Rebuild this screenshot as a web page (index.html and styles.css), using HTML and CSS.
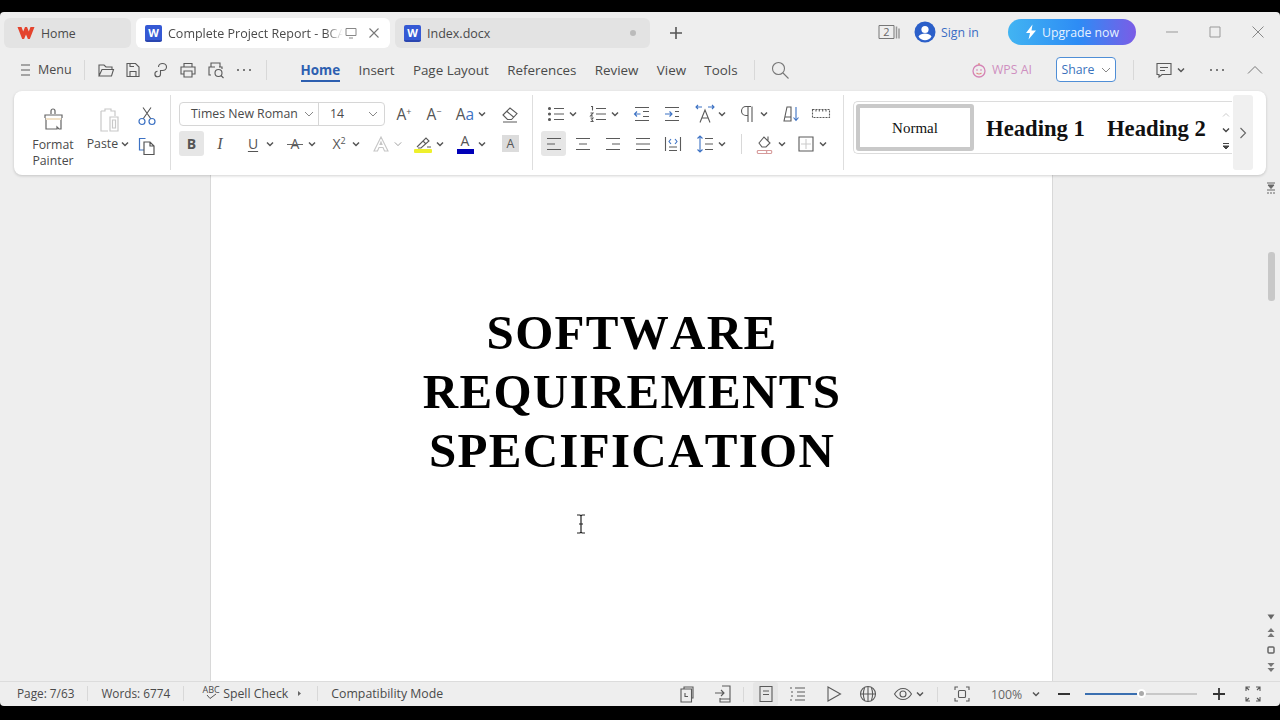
FILE: index.html
```html
<!DOCTYPE html>
<html lang="en">
<head>
    <meta charset="UTF-8">
    <meta name="viewport" content="width=device-width, initial-scale=1.0">
    <title>Complete Project Report - BCA</title>
    <link rel="stylesheet" href="styles.css">
</head>
<body>
<svg class="defs" width="0" height="0">
    <defs>
        <symbol id="caret" viewBox="0 0 8 8"><path d="M1 2.5l3 3 3-3" fill="none" stroke="#555" stroke-width="1.5"/></symbol>
        <symbol id="thin" viewBox="0 0 10 10"><path d="M1 3l4 4 4-4" fill="none" stroke="#888" stroke-width="1"/></symbol>
    </defs>
</svg>
<div class="window">

    <!-- tabs -->
    <div class="tabbar">
        <div class="tab tab-home">
            <svg width="18" height="14" viewBox="0 0 18 14"><path d="M0.500 1h4l1.700 4.500L8 1h2l1.800 4.500L13.500 1h4L12.800 13h-1.900L9 8.500 7.100 13H5.200z" fill="#e4432d"/></svg>
            <span>Home</span>
        </div>
        <div class="tab tab-active">
            <span class="word-icon">W</span>
            <span class="tab-title">Complete Project Report - BCA</span>
            <svg class="tab-screen" width="14" height="14" viewBox="0 0 14 14"><path d="M2 2.500h10v7H2z M5 12h4" fill="none" stroke="#888" stroke-width="1"/></svg>
            <svg width="12" height="12" viewBox="0 0 12 12"><path d="M1.500 1.500l9 9M10.500 1.500l-9 9" stroke="#777" stroke-width="1.100"/></svg>
        </div>
        <div class="tab tab-other">
            <span class="word-icon">W</span>
            <span class="tab-title-plain">Index.docx</span>
            <span class="tab-dot"></span>
        </div>
        <svg class="new-tab" width="14" height="14" viewBox="0 0 14 14"><path d="M7 1v12M1 7h12" stroke="#555" stroke-width="1.600"/></svg>
        <div class="tabbar-right">
            <svg class="win-count" width="24" height="16" viewBox="0 0 24 16"><path d="M1 1.500h15v13H1z" fill="none" stroke="#777"/><text x="8.500" y="12" font-size="11" text-anchor="middle" fill="#666" font-family="Open Sans">2</text><path d="M18.500 2.500v12M21 4.500v10" stroke="#999" stroke-width="1.500"/></svg>
            <svg class="avatar" width="22" height="22" viewBox="0 0 22 22"><circle cx="11" cy="11" r="10.500" fill="#2b5fc9"/><circle cx="11" cy="8.500" r="3.600" fill="#fff"/><path d="M4.500 15.500c1.500-2.300 3.800-3 6.500-3s5 .7 6.500 3c-1.500 2.500-3.800 3.700-6.500 3.700s-5-1.200-6.500-3.700z" fill="#fff"/></svg>
            <span class="sign-in">Sign in</span>
            <div class="upgrade">
                <svg width="12" height="16" viewBox="0 0 12 16"><path d="M7.500 .5L1 9h4l-1.500 6.500L11 6.500H6.500z" fill="#fff"/></svg>
                <span>Upgrade now</span>
            </div>
            <div class="win-buttons">
                <svg width="14" height="14" viewBox="0 0 14 14"><path d="M1 7h12" stroke="#999" stroke-width="1"/></svg>
                <svg width="14" height="14" viewBox="0 0 14 14"><path d="M2 2h10v10H2z" fill="none" stroke="#999" stroke-width="1"/></svg>
                <svg width="14" height="14" viewBox="0 0 14 14"><path d="M1.500 1.500l11 11M12.500 1.500l-11 11" stroke="#888" stroke-width="1"/></svg>
            </div>
        </div>
    </div>

    <!-- menu row -->
    <div class="menubar">
        <svg class="ic menu-ic" viewBox="0 0 20 20"><path d="M6 5h9M6 10h9M6 15h9"/></svg>
        <span class="menu-label">Menu</span>
        <span class="vline menu-sep"></span>
        <div class="quick">
            <svg class="ic" viewBox="0 0 20 20"><path d="M3 16V5h5l2 2h6v2.500M3 16h12.500l2-6.500H6z"/></svg>
            <svg class="ic" viewBox="0 0 20 20"><path d="M4 3.500h8.500l3.500 3.500v9.500H4zM7 16.500v-5h6v5M7 3.500v3h4"/></svg>
            <svg class="ic" viewBox="0 0 20 20"><path d="M7.500 7a4 3.500 0 1 1 4 3.500H9.500v3.500a2.800 2.800 0 1 1-3-2.800"/></svg>
            <svg class="ic" viewBox="0 0 20 20"><path d="M6 7V3.500h8V7M5.500 14H3V7h14v7h-2.500M6 11h8v6H6z"/></svg>
            <svg class="ic" viewBox="0 0 20 20"><path d="M5 7V3h9v4M5 15H3V7h6M13 7h3v2"/><circle cx="12.500" cy="13" r="3.500"/><path d="M15 15.500l2.500 2.500"/></svg>
            <svg class="ic dots" viewBox="0 0 20 20"><circle cx="4" cy="10" r="1"/><circle cx="10" cy="10" r="1"/><circle cx="16" cy="10" r="1"/></svg>
        </div>
        <span class="vline quick-sep"></span>
        <nav class="nav">
            <span class="nav-item nav-active">Home</span>
            <span class="nav-item">Insert</span>
            <span class="nav-item">Page Layout</span>
            <span class="nav-item">References</span>
            <span class="nav-item">Review</span>
            <span class="nav-item">View</span>
            <span class="nav-item">Tools</span>
        </nav>
        <span class="vline nav-sep"></span>
        <svg class="ic search-ic" viewBox="0 0 20 20"><circle cx="8.500" cy="8.500" r="6"/><path d="M13 13l5.500 5.500"/></svg>
        <div class="menubar-right">
            <svg class="wps-ai-ic" width="16" height="16" viewBox="0 0 16 16"><circle cx="8" cy="9" r="6" fill="none" stroke="#d583b5" stroke-width="1.300"/><circle cx="6" cy="8" r=".8" fill="#d07ab0"/><circle cx="10" cy="8" r=".8" fill="#d07ab0"/><path d="M5.500 11c1.500 1.200 3.500 1.200 5 0M8 3V1" fill="none" stroke="#e08a7c" stroke-width="1.200"/></svg>
            <span class="wps-ai">WPS AI</span>
            <div class="share">Share <svg width="10" height="10"><use href="#thin"/></svg></div>
            <span class="vline share-sep"></span>
            <svg class="ic comment-ic" viewBox="0 0 20 20"><path d="M3 3.500h14v11H8l-3 2.500v-2.500H3zM6 7.500h8M6 10.500h5"/></svg>
            <svg class="caret" width="8" height="8"><use href="#caret"/></svg>
            <svg class="ic dots more-ic" viewBox="0 0 20 20"><circle cx="4" cy="10" r="1"/><circle cx="10" cy="10" r="1"/><circle cx="16" cy="10" r="1"/></svg>
            <svg class="collapse-ic" width="16" height="10" viewBox="0 0 16 10"><path d="M1 8.500L8 1.500l7 7" fill="none" stroke="#777" stroke-width="1"/></svg>
        </div>
    </div>

    <!-- ribbon card sits over the top of the document -->
    <div class="ribbon">
        <div class="group-clip">
            <div class="painter">
                <svg width="24" height="24" viewBox="0 0 24 24"><path d="M10 7V4a2 2 0 0 1 4 0v3M4 11V8h17v3M5 11v11h11v-2l2 2h2V11" fill="none" stroke="#666" stroke-width="1.200"/><path d="M5 11h15v2H5z" fill="#f2e2c8"/></svg>
                <span>Format Painter</span>
            </div>
            <div class="paste">
                <svg width="24" height="26" viewBox="0 0 24 26"><path d="M5 4h4V2h6v2h4v5M5 4v20h7M14 10h8v14h-8zM16.500 13h3v8h-3z" fill="none" stroke="#c8c8c8" stroke-width="1.200"/></svg>
                <span class="paste-label">Paste <svg width="8" height="8"><use href="#caret"/></svg></span>
            </div>
            <div class="cut-copy">
                <svg width="20" height="20" viewBox="0 0 20 20"><path d="M6 1.500l8 11.500M14 1.500L6 13" fill="none" stroke="#555" stroke-width="1.100"/><circle cx="5" cy="15.500" r="3" fill="none" stroke="#3d72c4" stroke-width="1.200"/><circle cx="15" cy="15.500" r="3" fill="none" stroke="#3d72c4" stroke-width="1.200"/></svg>
                <svg width="20" height="20" viewBox="0 0 20 20"><path d="M7 14H2.500V2.500h6" fill="none" stroke="#3d72c4" stroke-width="1.200"/><path d="M7 6h6l4 4v8.500H7zM13 6v4h4" fill="none" stroke="#555" stroke-width="1.200"/></svg>
            </div>
        </div>
        <span class="ribbon-sep"></span>

        <div class="group-font">
            <div class="row font-row1">
                <div class="font-box">
                    <div class="font-name">Times New Roman <svg width="10" height="10"><use href="#thin"/></svg></div>
                    <div class="font-size">14 <svg width="10" height="10"><use href="#thin"/></svg></div>
                </div>
                <div class="cell"><span class="glyph grow">A<sup>+</sup></span></div>
                <div class="cell"><span class="glyph grow">A<sup>&#8722;</sup></span></div>
                <div class="cell"><span class="glyph grow aa">A<b>a</b></span><svg class="caret" width="8" height="8"><use href="#caret"/></svg></div>
                <div class="cell"><svg class="ic" viewBox="0 0 20 20"><path d="M3 11l7-7 7 5.500-5.500 6H7.500zM7 7.500l6.500 5.500M3 18h14"/></svg></div>
            </div>
            <div class="row font-row2">
                <div class="cell cell-on"><span class="glyph bold">B</span></div>
                <div class="cell"><span class="glyph ital">I</span></div>
                <div class="cell"><span class="glyph under">U</span><svg class="caret" width="8" height="8"><use href="#caret"/></svg></div>
                <div class="cell"><span class="glyph strike">A</span><svg class="caret" width="8" height="8"><use href="#caret"/></svg></div>
                <div class="cell"><span class="glyph">X<sup>2</sup></span><svg class="caret" width="8" height="8"><use href="#caret"/></svg></div>
                <div class="cell"><svg class="ic pale" viewBox="0 0 20 20"><path d="M3 17L10 3l7 14h-3.500l-1.500-3.500H8L6.500 17zM9 10.500h2l-1-2.500z"/></svg><svg class="caret pale-caret" width="8" height="8"><use href="#thin"/></svg></div>
                <div class="cell"><svg class="ic" viewBox="0 0 20 20"><path d="M4 13l9-9 3 3-8 7H5M10 7l3 3M14 13h4"/><rect x="1" y="15" width="18" height="4" rx="1" fill="#eef02c" stroke="none"/></svg><svg class="caret" width="8" height="8"><use href="#caret"/></svg></div>
                <div class="cell"><span class="color-a">A<i></i></span><svg class="caret" width="8" height="8"><use href="#caret"/></svg></div>
                <div class="cell"><span class="shade-a">A</span></div>
            </div>
        </div>
        <span class="ribbon-sep"></span>

        <div class="group-para">
            <div class="row para-row1">
                <div class="cell first"><svg class="ic" viewBox="0 0 20 20"><path d="M8 4.500h10M8 10h10M8 15.500h10"/><circle cx="3.500" cy="4.500" r="1" fill="#555"/><circle cx="3.500" cy="10" r="1" fill="#555"/><circle cx="3.500" cy="15.500" r="1" fill="#555"/></svg><svg class="caret" width="8" height="8"><use href="#caret"/></svg></div>
                <div class="cell"><svg class="ic" viewBox="0 0 20 20"><path d="M8 4.500h10M8 10h10M8 15.500h10M3 2.500h1.500v4M2.500 9h2.500l-2.500 3H5M2.500 14h2.500l-1.200 1.500L5 17.500H2.500"/></svg><svg class="caret" width="8" height="8"><use href="#caret"/></svg></div>
                <div class="cell"><svg class="ic" viewBox="0 0 20 20"><path d="M3 3.500h14M3 16.500h14M11 7.500h6M11 12.500h6"/><path class="blue" d="M8.500 10H2.500M5 7.500L2.500 10 5 12.500"/></svg></div>
                <div class="cell"><svg class="ic" viewBox="0 0 20 20"><path d="M3 3.500h14M3 16.500h14M13 7.500h4M13 12.500h4"/><path class="blue" d="M3 10h7M7.500 7.500L10 10l-2.500 2.500"/></svg></div>
                <div class="cell"><svg class="ic" viewBox="0 0 20 20"><path d="M5 18.500L10 6l5 12.500M6.800 14h6.400"/><path class="blue" d="M1 3h6M3 1L1 3l2 2M13 3h6M17 1l2 2-2 2"/></svg><svg class="caret" width="8" height="8"><use href="#caret"/></svg></div>
                <div class="cell"><svg class="ic" viewBox="0 0 20 20"><path d="M14 2.500H9a4.500 4.500 0 0 0 0 9h2M11 2.500V18M15 2.500V18"/></svg><svg class="caret" width="8" height="8"><use href="#caret"/></svg></div>
                <div class="cell"><svg class="ic" viewBox="0 0 20 20"><path d="M3 17L6 3h4v14zM3.500 13H10M3 17h7"/><path class="blue" d="M15 3v13M12.500 13.500L15 16.500l2.500-3"/></svg></div>
                <div class="cell"><svg class="ic" viewBox="0 0 20 20"><path d="M1.500 5.500h17v8h-17zM5 5.500v2M8.300 5.500v3M11.700 5.500v2M15 5.500v3" stroke-dasharray="2 1"/></svg></div>
            </div>
            <div class="row para-row2">
                <div class="cell cell-on"><svg class="ic" viewBox="0 0 20 20"><path d="M3 4.500h14M3 10h8M3 15.500h14"/></svg></div>
                <div class="cell"><svg class="ic" viewBox="0 0 20 20"><path d="M3 4.500h14M6 10h8M3 15.500h14"/></svg></div>
                <div class="cell"><svg class="ic" viewBox="0 0 20 20"><path d="M3 4.500h14M9 10h8M3 15.500h14"/></svg></div>
                <div class="cell"><svg class="ic" viewBox="0 0 20 20"><path d="M3 4.500h14M3 10h14M3 15.500h14"/></svg></div>
                <div class="cell"><svg class="ic" viewBox="0 0 20 20"><path d="M2.500 3v14M17.500 3v14M6 13h8M6 16.500h8"/><path class="blue" d="M8 5L6 7.500 8 10M12 5l2 2.500-2 2.500"/></svg></div>
                <div class="cell"><svg class="ic" viewBox="0 0 20 20"><path d="M10 4.500h8M10 10h8M10 15.500h8"/><path class="blue" d="M5 2v16M2.500 4.500L5 2l2.500 2.500M2.500 15.500L5 18l2.500-2.500"/></svg><svg class="caret" width="8" height="8"><use href="#caret"/></svg><span class="vline row-sep"></span></div>
                <div class="cell"><svg class="ic" viewBox="0 0 20 20"><path d="M4 9l5-6 6 6-4 4H7zM13 2.500v4"/><path d="M3 16.500h8a1.800 1.800 0 0 1 0 3H3a1.800 1.800 0 0 1 0-3zM11 16.500h5a1.800 1.800 0 0 1 0 3h-5" stroke="#d69a9a"/></svg><svg class="caret" width="8" height="8"><use href="#caret"/></svg></div>
                <div class="cell"><svg class="ic" viewBox="0 0 20 20"><path d="M3 3h14v14H3z"/><path d="M10 5v10M5 10h10" stroke="#ccc"/></svg><svg class="caret" width="8" height="8"><use href="#caret"/></svg></div>
            </div>
        </div>
        <span class="ribbon-sep"></span>

        <div class="gallery">
            <div class="style-normal">Normal</div>
            <div class="style-h1">Heading 1</div>
            <div class="style-h2">Heading 2</div>
            <div class="gallery-arrows">
                <svg width="8" height="6" viewBox="0 0 8 6"><path d="M1 4.500l3-3 3 3" fill="none" stroke="#ccc" stroke-width="1"/></svg>
                <svg width="8" height="6" viewBox="0 0 8 6"><path d="M1 1.500l3 3 3-3" fill="none" stroke="#444" stroke-width="1.400"/></svg>
                <svg width="8" height="8" viewBox="0 0 8 8"><path d="M1 1.500h6M1 4l3 3 3-3z" fill="#444" stroke="#444" stroke-width="1"/></svg>
            </div>
        </div>
        <div class="gallery-next">
            <svg width="8" height="12" viewBox="0 0 8 12"><path d="M1.500 1l5 5-5 5" fill="none" stroke="#666" stroke-width="1.100"/></svg>
        </div>
    </div>

    <!-- document -->
    <div class="workspace">
        <div class="page">
            <h1 class="doc-title">SOFTWARE<br>REQUIREMENTS<br>SPECIFICATION</h1>
        </div>
        <svg class="ibeam" width="10" height="20" viewBox="0 0 10 20"><path d="M1 1h3l1 1 1-1h3M5 2v16M1 19h3l1-1 1 1h3M3 10h4" fill="none" stroke="#222" stroke-width="1.200"/></svg>
        <div class="scrollbar">
            <svg class="split" width="10" height="12" viewBox="0 0 10 12"><path d="M1 1h8M2 3h6L5 6.500zM1 8h8M1 11h2M4 11h2M7 11h2" fill="#666" stroke="#666" stroke-width="1"/></svg>
            <div class="scroll-thumb"></div>
            <div class="scroll-btns">
                <svg width="8" height="6" viewBox="0 0 8 6"><path d="M.5 .5h7L4 5.500z" fill="#666"/></svg>
                <svg width="8" height="10" viewBox="0 0 8 10"><path d="M4 0l3.500 4h-7zM4 5l3.500 4h-7z" fill="#777"/></svg>
                <svg width="8" height="8" viewBox="0 0 8 8"><rect x="1" y="1" width="6" height="6" rx="1" fill="none" stroke="#666" stroke-width="1.500"/></svg>
                <svg width="8" height="10" viewBox="0 0 8 10"><path d="M4 5L.5 1h7zM4 10L.5 6h7z" fill="#777"/></svg>
            </div>
        </div>
    </div>

    <!-- status bar -->
    <div class="statusbar">
        <span class="st st-page">Page: 7/63</span>
        <span class="vline"></span>
        <span class="st st-words">Words: 6774</span>
        <span class="vline"></span>
        <span class="abc">ABC<svg width="14" height="7" viewBox="0 0 14 7"><path d="M3 2l3 3.500L12 1" fill="none" stroke="#555" stroke-width="1"/></svg></span>
        <span class="st">Spell Check</span>
        <svg class="spell-arrow" width="5" height="7" viewBox="0 0 5 7"><path d="M1 1l3 2.500L1 6z" fill="#666"/></svg>
        <span class="vline spell-sep"></span>
        <span class="st">Compatibility Mode</span>
        <div class="status-right">
            <div class="cell"><svg class="ic" viewBox="0 0 20 20"><path d="M7 4.500V3h9v11h-1M4 5h10.500v13H4zM8 9v3.500h3"/></svg></div>
            <div class="cell"><svg class="ic" viewBox="0 0 20 20"><path d="M9 2h8v16H7v-4M7 15h10M2 9h9M8 6l3 3-3 3"/></svg><span class="vline status-sep"></span></div>
            <div class="cell cell-on"><svg class="ic" viewBox="0 0 20 20"><path d="M4 2.500h12v15H4zM7 7h6M7 10.500h6"/></svg></div>
            <div class="cell"><svg class="ic" viewBox="0 0 20 20"><path d="M7 4h10M9 8h8M9 12h8M7 16h10M2 4h2M3 8h2M3 12h2M2 16h2"/></svg></div>
            <div class="cell"><svg class="ic" viewBox="0 0 20 20"><path d="M4 3l12.500 7L4 17z"/></svg></div>
            <div class="cell"><svg class="ic" viewBox="0 0 20 20"><circle cx="10" cy="10" r="7.500"/><path d="M2.500 10h15M2.500 10M10 2.500v15M6.500 4c-1.500 4-1.500 8 0 12M13.500 4c1.500 4 1.500 8 0 12"/></svg></div>
            <div class="cell"><svg class="ic" viewBox="0 0 20 20"><path d="M1.500 10C4 6 7 4.500 10 4.500s6 1.500 8.500 5.500c-2.500 4-5.500 5.500-8.500 5.500S4 14 1.500 10z"/><circle cx="10" cy="10" r="3"/></svg><svg class="caret" width="8" height="8"><use href="#caret"/></svg><span class="vline eye-sep"></span></div>
            <div class="cell"><svg class="ic" viewBox="0 0 20 20"><path d="M3 6V3h3M14 3h3v3M17 14v3h-3M6 17H3v-3"/><rect x="6.500" y="6.500" width="7" height="7" rx="1"/></svg></div>
            <div class="cell zoom-pct"><span>100%</span><svg width="8" height="8"><use href="#caret"/></svg></div>
            <div class="cell"><span class="zoom-minus"></span></div>
            <div class="slider"><span class="slider-fill"></span><span class="slider-knob"></span></div>
            <div class="cell"><svg width="14" height="14" viewBox="0 0 14 14"><path d="M7 1v12M1 7h12" stroke="#333" stroke-width="1.800"/></svg></div>
            <div class="cell"><svg class="ic" viewBox="0 0 20 20"><path d="M3 7V3h4M13 3h4v4M17 13v4h-4M7 17H3v-4M3 3l3 3M17 3l-3 3M17 17l-3-3M3 17l3-3"/></svg></div>
        </div>
    </div>
</div>
</body>
</html>
```

FILE: styles.css
```css
* {
    box-sizing: border-box;
}
body {
    margin: 0;
    background-color: #000;
    font-family: "Open Sans", "Noto Sans", sans-serif;
    color: #4a4a4a;
    overflow: hidden;
}
.defs {
    display: block;
    height: 0;
}
.window {
    height: 694px;
    margin: 12px 0 14px;
    background-color: #eeeeee;
    border-radius: 4px;
    display: flex;
    flex-direction: column;
    font-size: 12.3px;
    position: relative;
}
.ic {
    width: 20px;
    height: 20px;
    flex: none;
    fill: none;
    stroke: #5a5a5a;
    stroke-width: 1.1;
}
.ic .blue {
    stroke: #3d72c4;
}
.ic.dots {
    fill: #555;
    stroke: none;
}
.ic.pale {
    stroke: #c6c6c6;
}
.caret {
    width: 8px;
    height: 8px;
    margin-left: 3px;
    flex: none;
}
.pale-caret {
    width: 8px;
    height: 8px;
    margin-left: 3px;
}
.vline {
    display: block;
    width: 1px;
    height: 20px;
    background-color: #d8d8d8;
    flex: none;
}

/* tabs */
.tabbar {
    height: 38px;
    flex: none;
    display: flex;
    align-items: flex-start;
    padding: 6px 0 0 4px;
    gap: 5px;
}
.tab {
    height: 30px;
    border-radius: 6px;
    display: flex;
    align-items: center;
    flex: none;
}
.tab-home {
    width: 127px;
    background-color: #e3e3e3;
    padding-left: 13px;
    gap: 6px;
}
.tab-active {
    width: 254px;
    background-color: #fff;
    padding-left: 9px;
}
.tab-other {
    width: 255px;
    background-color: #e3e3e3;
    padding-left: 9px;
}
.word-icon {
    width: 17px;
    height: 17px;
    border-radius: 2px;
    background-color: #3559d4;
    border-bottom: 2px solid #2a46b0;
    color: #fff;
    font-size: 11px;
    font-weight: 700;
    line-height: 15px;
    text-align: center;
    flex: none;
}
.tab-title {
    width: 175px;
    margin-left: 6px;
    font-size: 12.5px;
    white-space: nowrap;
    overflow: hidden;
    -webkit-mask-image: linear-gradient(to right, #000 90%, transparent);
    mask-image: linear-gradient(to right, #000 90%, transparent);
}
.tab-screen {
    margin-left: 1px;
    margin-right: 10px;
}
.tab-title-plain {
    margin-left: 6px;
    font-size: 12.5px;
}
.tab-dot {
    width: 6px;
    height: 6px;
    border-radius: 50%;
    background-color: #bbb;
    margin-left: auto;
    margin-right: 14px;
}
.new-tab {
    margin: 8px 0 0 14px;
    flex: none;
}
.tabbar-right {
    margin-left: auto;
    display: flex;
    align-items: center;
    height: 27px;
}
.win-count {
    margin-right: 12px;
}
.sign-in {
    color: #3a6cc4;
    margin-left: 5px;
    padding-top: 2px;
    width: 67px;
}
.upgrade {
    width: 128px;
    height: 26px;
    border-radius: 13px;
    background: linear-gradient(to right, #42b4f2, #2d8cf5 55%, #7b5ce6);
    color: #e6f2ff;
    padding-top: 1px;
    display: flex;
    align-items: center;
    justify-content: center;
    gap: 5px;
}
.win-buttons {
    display: flex;
    align-items: center;
    gap: 29px;
    margin: 0 15px 0 29px;
}

/* menu row */
.menubar {
    height: 41px;
    flex: none;
    display: flex;
    align-items: center;
    padding: 0 0 2px 15px;
}
.menu-label {
    margin-left: 3px;
    font-size: 12.5px;
}
.menu-sep {
    margin-left: 12px;
}
.quick {
    display: flex;
    gap: 7.6px;
    margin-left: 11px;
}
.quick-sep {
    margin-left: 12px;
}
.nav {
    display: flex;
    gap: 18.3px;
    margin-left: 34px;
    font-size: 13.4px;
}
.nav-item {
    height: 24px;
    line-height: 24px;
    color: #4a4a4a;
}
.nav-active {
    color: #2d5fb0;
    font-weight: 700;
    border-bottom: 2px solid #2d5fb0;
}
.nav-sep {
    margin-left: 16px;
}
.search-ic {
    margin-left: 15px;
    stroke: #777;
}
.menubar-right {
    margin-left: auto;
    display: flex;
    align-items: center;
}
.wps-ai {
    color: #cf8fc0;
    margin-left: 5px;
    width: 64px;
}
.share {
    width: 60px;
    height: 25px;
    border: 1px solid #4f8ed6;
    border-radius: 4px;
    background-color: #fff;
    color: #3a72bc;
    display: flex;
    align-items: center;
    justify-content: center;
    gap: 6px;
}
.share-sep {
    margin-left: 17px;
}
.comment-ic {
    margin-left: 20px;
}
.more-ic {
    margin-left: 22px;
}
.collapse-ic {
    margin: 0 17px 0 20px;
}

/* ribbon */
.ribbon {
    height: 84px;
    flex: none;
    margin: 0 14px;
    padding: 4px 0 5px;
    background-color: #fff;
    border-radius: 8px;
    box-shadow: 0 1px 3px rgba(0, 0, 0, 0.18);
    display: flex;
    position: relative;
    z-index: 2;
}
.ribbon-sep {
    width: 1px;
    background-color: #dedede;
    flex: none;
}
.group-clip {
    width: 156px;
    flex: none;
    display: flex;
    padding-left: 14px;
}
.painter {
    width: 50px;
    padding-top: 12px;
    display: flex;
    flex-direction: column;
    align-items: center;
    text-align: center;
    line-height: 16px;
}
.painter span {
    margin-top: 6px;
}
.paste {
    width: 48px;
    margin-left: 6px;
    padding-top: 12px;
    display: flex;
    flex-direction: column;
    align-items: center;
}
.paste-label {
    white-space: nowrap;
    margin-top: 3px;
    line-height: 16px;
}
.cut-copy {
    width: 22px;
    margin-left: 4px;
    padding-top: 11px;
    display: flex;
    flex-direction: column;
    align-items: center;
    gap: 10px;
}
.group-font {
    width: 361px;
    flex: none;
    padding: 7px 0 0 8px;
}
.group-para {
    width: 310px;
    flex: none;
    padding: 7px 0 0 8px;
}
.row {
    display: grid;
    height: 25px;
    align-items: center;
}
.row:first-child {
    height: 24px;
}
.row + .row {
    margin-top: 5px;
}
.font-row1 {
    grid-template-columns: 215px 30px 31px 45px 20px;
}
.font-row2 {
    grid-template-columns: 31px 33px 42px 44px 42px 42px 42px 45px 24px;
}
.para-row1 {
    grid-template-columns: 47px 44px 30px 33px 42px 44px 30px 20px;
}
.para-row2 {
    grid-template-columns: 32px 30px 30px 30px 32px 60px 41px 30px;
}
.cell {
    display: flex;
    align-items: center;
    height: 25px;
    white-space: nowrap;
}
.row:first-child .cell {
    height: 24px;
}
.cell.first {
    padding-left: 5px;
}
.cell-on {
    width: 25px;
    border-radius: 3px;
    background-color: #e6e6e6;
    justify-content: center;
}
.font-box {
    width: 206px;
    height: 24px;
    border: 1px solid #d6d6d6;
    border-radius: 4px;
    display: flex;
}
.font-name {
    width: 139px;
    border-right: 1px solid #d6d6d6;
    padding-left: 11px;
    line-height: 22px;
    white-space: nowrap;
    display: flex;
    align-items: center;
    gap: 6px;
}
.font-size {
    flex: 1;
    padding: 0 6px 0 11px;
    line-height: 22px;
    display: flex;
    align-items: center;
    justify-content: space-between;
}
.glyph {
    width: 20px;
    text-align: center;
    font-size: 14px;
    color: #555;
    white-space: nowrap;
    line-height: 20px;
}
.glyph sup {
    font-size: 9px;
    line-height: 0;
    vertical-align: 5px;
}
.grow {
    font-size: 15.5px;
}
.aa b {
    font-weight: 400;
    color: #3d72c4;
}
.bold {
    font-weight: 700;
}
.ital {
    font-family: "Liberation Serif", serif;
    font-style: italic;
    font-size: 16px;
}
.under {
    text-decoration: underline;
    text-underline-offset: 2px;
}
.strike {
    position: relative;
}
.strike::after {
    content: "";
    position: absolute;
    left: 2px;
    right: 2px;
    top: 10px;
    height: 1px;
    background-color: #666;
}
.color-a {
    width: 20px;
    height: 20px;
    text-align: center;
    font-size: 14px;
    line-height: 14px;
    position: relative;
    color: #555;
}
.color-a i {
    display: block;
    width: 17px;
    height: 5px;
    margin: 1px auto 0;
    background-color: #0000b8;
}
.shade-a {
    width: 17px;
    height: 17px;
    margin: 0 2px;
    background-color: #dcdcdc;
    text-align: center;
    line-height: 17px;
    color: #555;
}
.row-sep {
    margin-left: 15px;
}
.gallery {
    width: 379px;
    height: 53px;
    margin: 6px 0 0 9px;
    flex: none;
    border: 1px solid #dcdcdc;
    border-right: none;
    border-radius: 5px 0 0 5px;
    padding: 2px 0 0 2px;
    display: flex;
    font-family: "Liberation Serif", serif;
    color: #111;
    white-space: nowrap;
}
.style-normal {
    width: 118px;
    height: 47px;
    border: 4px solid #c9c9c9;
    border-radius: 3px;
    text-align: center;
    line-height: 41px;
    font-size: 15px;
}
.style-h1,
.style-h2 {
    font-size: 22.7px;
    font-weight: 700;
    line-height: 50px;
}
.style-h1 {
    margin-left: 12px;
}
.style-h2 {
    margin-left: 22px;
}
.gallery-arrows {
    margin-left: auto;
    width: 12px;
    padding: 8px 0 0;
    display: flex;
    flex-direction: column;
    align-items: center;
    gap: 9px;
}
.gallery-next {
    width: 20px;
    margin: 0 0 0 1px;
    background-color: #f0f0f0;
    border-radius: 3px;
    display: flex;
    align-items: center;
    justify-content: center;
}

/* document */
.workspace {
    flex: 1;
    min-height: 0;
    display: flex;
    justify-content: center;
    position: relative;
    padding-right: 17px;
}
.page {
    width: 843px;
    margin-right: 1px;
    background-color: #fff;
    border-left: 1px solid #d8d8d8;
    border-right: 1px solid #d8d8d8;
    padding-top: 128px;
}
.doc-title {
    margin: 0;
    padding-left: 2px;
    font-family: "Liberation Serif", serif;
    font-size: 49px;
    font-weight: 700;
    line-height: 59px;
    letter-spacing: 1.3px;
    font-kerning: none;
    text-align: center;
    color: #000;
}
.ibeam {
    position: absolute;
    left: 576px;
    top: 339px;
}
.scrollbar {
    position: absolute;
    right: 0;
    top: 0;
    bottom: 0;
    width: 18px;
    display: flex;
    flex-direction: column;
    align-items: center;
    padding: 7px 0 9px;
}
.scroll-thumb {
    width: 7px;
    height: 49px;
    margin-top: 58px;
    background-color: #c8c8c8;
    border-radius: 3px;
}
.scroll-btns {
    margin-top: auto;
    display: flex;
    flex-direction: column;
    align-items: center;
    gap: 8px;
}

/* status bar */
.statusbar {
    height: 25px;
    flex: none;
    border-top: 1px solid #dcdcdc;
    display: flex;
    align-items: center;
    padding: 0 0 2px 17px;
    position: relative;
    z-index: 1;
}
.statusbar .vline {
    height: 15px;
}
.st {
    white-space: nowrap;
}
.st-page,
.st-words {
    font-size: 11.8px;
    margin-right: 13px;
}
.st-words {
    margin-left: 13px;
}
.abc {
    margin: 0 3px 0 18px;
    font-size: 9px;
    width: 18px;
    line-height: 9px;
    display: flex;
    flex-direction: column;
    align-items: center;
    height: 16px;
}
.abc svg {
    margin-top: -1px;
}
.spell-arrow {
    margin-left: 9px;
}
.spell-sep {
    margin: 0 13px 0 15px;
}
.status-right {
    position: absolute;
    left: 677px;
    top: 0;
    height: 24px;
    display: grid;
    grid-template-columns: 36px 40px 35px 36px 34px 35px 59px 39px 67px 27px 127px 31px 37px;
    align-items: center;
}
.status-right .cell {
    height: 24px;
}
.statusbar .status-sep {
    margin-left: 10px;
}
.statusbar .eye-sep {
    margin-left: 13px;
}
.zoom-pct {
    color: #666;
    gap: 10px;
}
.zoom-minus {
    display: block;
    width: 12px;
    height: 2px;
    background-color: #333;
}
.slider {
    width: 112px;
    height: 2px;
    background-color: #c8c8c8;
    position: relative;
}
.slider-fill {
    display: block;
    width: 52px;
    height: 2px;
    background-color: #3a6fb0;
}
.slider-knob {
    position: absolute;
    left: 52px;
    top: -4px;
    width: 9px;
    height: 9px;
    border-radius: 50%;
    background-color: #aaa;
    border: 2px solid #fff;
}
```
